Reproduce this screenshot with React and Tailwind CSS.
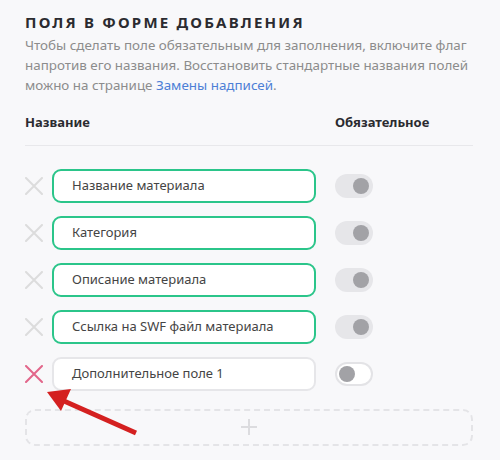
import React from 'react';

const fields = [
  { name: 'Название материала', required: true },
  { name: 'Категория', required: true },
  { name: 'Описание материала', required: true },
  { name: 'Ссылка на SWF файл материала', required: true },
  { name: 'Дополнительное поле 1', required: false, removable: true },
];

const Cross = ({ active }) => (
  <svg width="18" height="18" viewBox="0 0 18 18" className="shrink-0">
    <path
      d="M1 1L17 17M17 1L1 17"
      stroke={active ? '#e2668a' : '#dcdcdc'}
      strokeWidth="2"
      strokeLinecap="round"
    />
  </svg>
);

const Toggle = ({ on }) =>
  on ? (
    <div className="w-[38px] h-[24px] rounded-full bg-[#e6e6e9] flex items-center justify-end px-[4px]">
      <div className="w-[16px] h-[16px] rounded-full bg-[#a2a2a6]"></div>
    </div>
  ) : (
    <div className="w-[38px] h-[24px] rounded-full bg-white border-2 border-[#e3e3e6] flex items-center px-[2px]">
      <div className="w-[16px] h-[16px] rounded-full bg-[#a2a2a6]"></div>
    </div>
  );

export default function App() {
  return (
    <div
      className="relative w-[500px] h-[460px] overflow-hidden bg-[#f8f8fa] px-[25px] pt-[11px]"
      style={{ fontFamily: '"Noto Sans", "Open Sans", sans-serif' }}
    >
      <h2 className="text-[15px] font-bold tracking-[2.2px] text-[#2b2b30] leading-[22px]">
        ПОЛЯ В ФОРМЕ ДОБАВЛЕНИЯ
      </h2>
      <p className="mt-[2px] text-[13.4px] leading-[20px] text-[#8c8c8c] w-[445px]">
        Чтобы сделать поле обязательным для заполнения, включите флаг напротив
        его названия. Восстановить стандартные названия полей можно на странице{' '}
        <span className="text-[#4d7fd6]">Замены надписей</span>.
      </p>

      <div className="mt-[18px] flex items-center justify-between w-[448px] pb-[12px] border-b border-[#e8e8eb] text-[13px] font-bold text-[#2b2b30]">
        <span>Название</span>
        <span className="w-[138px]">Обязательное</span>
      </div>

      <div className="mt-[23px] flex flex-col gap-[13px]">
        {fields.map((f) => (
          <div key={f.name} className="flex items-center">
            <Cross active={f.removable} />
            <div
              className={`ml-[9px] w-[264px] h-[34px] rounded-[9px] bg-white flex items-center px-[18px] text-[13px] text-[#444] border-2 ${
                f.required ? 'border-[#2bc58a]' : 'border-[#e6e6e9]'
              }`}
            >
              {f.name}
            </div>
            <div className="ml-[19px]">
              <Toggle on={f.required} />
            </div>
          </div>
        ))}
      </div>

      <div className="mt-[18px] w-[448px] h-[37px] rounded-[10px] border-2 border-dashed border-[#e4e4e7] flex items-center justify-center">
        <svg width="18" height="18" viewBox="0 0 18 18">
          <path d="M9 1V17M1 9H17" stroke="#dcdcdf" strokeWidth="2" />
        </svg>
      </div>

      <svg
        className="absolute left-0 top-0 pointer-events-none"
        width="500"
        height="460"
        viewBox="0 0 500 460"
      >
        <line x1="136" y1="433" x2="64" y2="401" stroke="#d42020" strokeWidth="5" />
        <polygon points="47,392 71,389 61,411" fill="#d42020" />
      </svg>
    </div>
  );
}
